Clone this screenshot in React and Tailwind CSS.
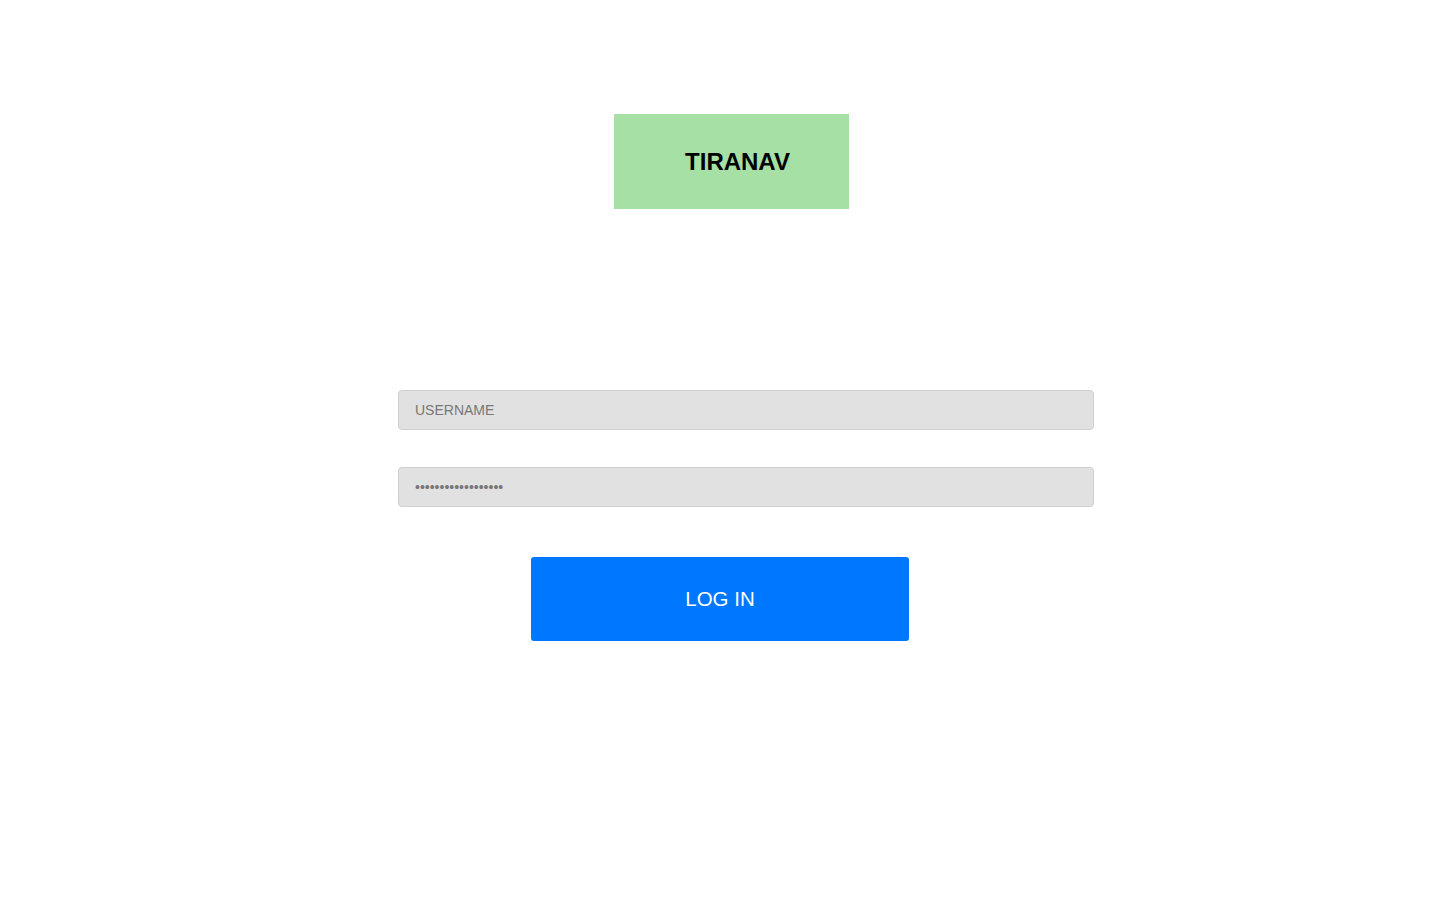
export default function App() {
  return (
    <div className="min-h-screen w-full bg-white font-['Liberation_Sans',Arial,sans-serif] pt-[114px]">
      {/* LOGO */}
      <div className="flex justify-center pl-[23px]">
        <div className="w-[235px] h-[95px] bg-[#a6e0a4] flex items-center justify-center pl-[12px]">
          <span className="text-[24px] font-bold text-black">TIRANAV</span>
        </div>
      </div>

      {/* FORM */}
      <div className="flex justify-center pl-[52px] mt-[181px]">
        <div className="w-[696px] flex flex-col gap-[37px]">
          <input
            type="text"
            placeholder="USERNAME"
            className="h-[40px] w-full rounded-[4px] border border-[#cfcfcf] bg-[#e1e1e1] px-4 text-[14px] text-[#666] placeholder:text-[#777] outline-none"
          />
          <input
            type="password"
            defaultValue="******************"
            className="h-[40px] w-full rounded-[4px] border border-[#cfcfcf] bg-[#e1e1e1] px-4 text-[14px] text-[#777] outline-none"
          />
        </div>
      </div>

      <div className="flex justify-center mt-[50px]">
        <button className="w-[378px] h-[84px] rounded-[3px] bg-[#0077ff] text-white text-[20.5px]">
          LOG IN
        </button>
      </div>
    </div>
  );
}
